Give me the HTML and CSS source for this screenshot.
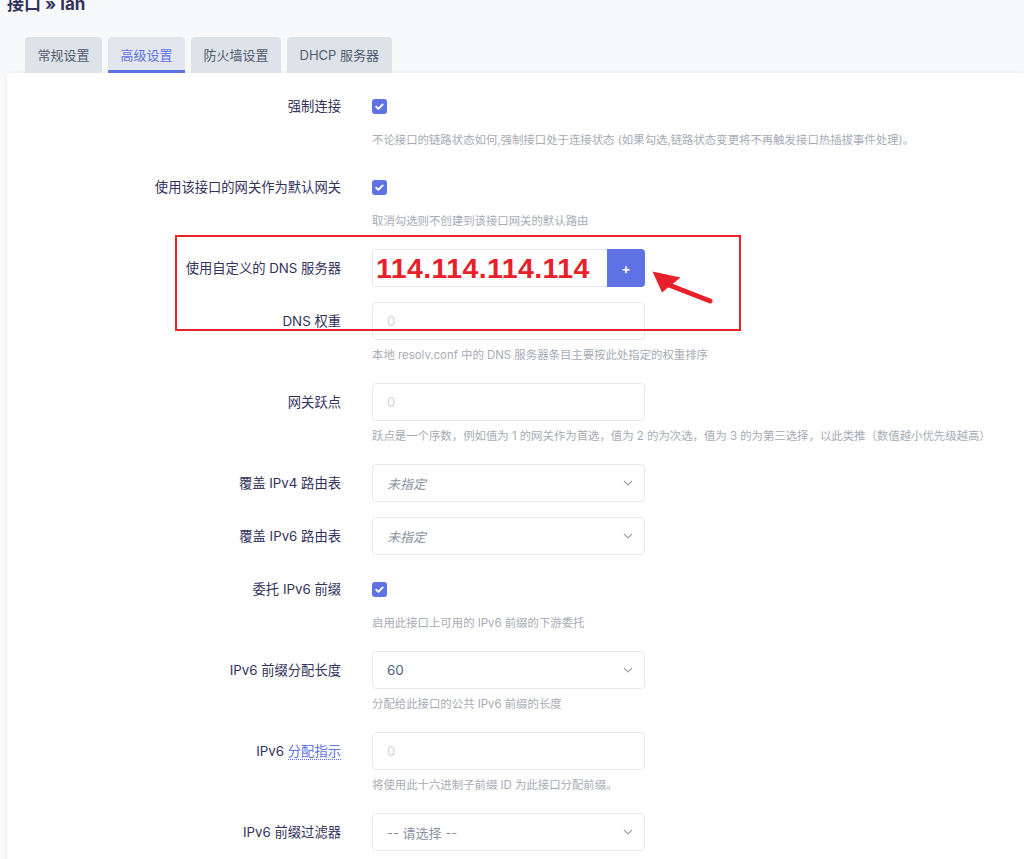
FILE: index.html
```html
<!DOCTYPE html>
<html lang="zh-CN">
<head>
<meta charset="utf-8">
<title>接口 » lan</title>
<link rel="stylesheet" href="styles.css">
</head>
<body>
<div class="page">
  <h2 class="title">接口 » lan</h2>
  <div class="tabs">
    <div class="tab">常规设置</div>
    <div class="tab active">高级设置</div>
    <div class="tab">防火墙设置</div>
    <div class="tab">DHCP 服务器</div>
  </div>
  <div class="panel">
    <div class="row">
      <div class="label">强制连接</div>
      <div class="field"><span class="check"><svg viewBox="0 0 15 15" width="15" height="15"><path d="M4.2 7.7l2.2 2.1 4.3-4.4" fill="none" stroke="#fff" stroke-width="1.9" stroke-linecap="round" stroke-linejoin="round"/></svg></span></div>
      <div class="desc">不论接口的链路状态如何,强制接口处于连接状态 (如果勾选,链路状态变更将不再触发接口热插拔事件处理)。</div>
    </div>
    <div class="row">
      <div class="label">使用该接口的网关作为默认网关</div>
      <div class="field"><span class="check"><svg viewBox="0 0 15 15" width="15" height="15"><path d="M4.2 7.7l2.2 2.1 4.3-4.4" fill="none" stroke="#fff" stroke-width="1.9" stroke-linecap="round" stroke-linejoin="round"/></svg></span></div>
      <div class="desc">取消勾选则不创建到该接口网关的默认路由</div>
    </div>
    <div class="dns-group">
      <div class="row">
        <div class="label">使用自定义的 DNS 服务器</div>
        <div class="field">
          <div class="input dns-input"><span class="dns-value">114.114.114.114</span></div>
          <div class="add-btn">+</div>
        </div>
      </div>
      <div class="row">
        <div class="label">DNS 权重</div>
        <div class="field"><div class="input"><span class="ph">0</span></div></div>
        <div class="desc">本地 resolv.conf 中的 DNS 服务器条目主要按此处指定的权重排序</div>
      </div>
      <div class="red-box"></div>
      <svg class="arrow" viewBox="0 0 75 45" width="75" height="45">
        <line x1="24" y1="20" x2="65" y2="36" stroke="#e8202a" stroke-width="5" stroke-linecap="round"/>
        <polygon points="7.5,6.5 17,27.5 35.5,12.5" fill="#e8202a"/>
      </svg>
    </div>
    <div class="row">
      <div class="label">网关跃点</div>
      <div class="field"><div class="input"><span class="ph">0</span></div></div>
      <div class="desc">跃点是一个序数，例如值为 1 的网关作为首选，值为 2 的为次选，值为 3 的为第三选择，以此类推（数值越小优先级越高）</div>
    </div>
    <div class="row">
      <div class="label">覆盖 IPv4 路由表</div>
      <div class="field"><div class="input select"><span class="unset">未指定</span><svg class="chev" viewBox="0 0 10 6" width="10" height="6"><path d="M1 1l4 4 4-4" fill="none" stroke="#9aa3b1" stroke-width="1.2"/></svg></div></div>
    </div>
    <div class="row">
      <div class="label">覆盖 IPv6 路由表</div>
      <div class="field"><div class="input select"><span class="unset">未指定</span><svg class="chev" viewBox="0 0 10 6" width="10" height="6"><path d="M1 1l4 4 4-4" fill="none" stroke="#9aa3b1" stroke-width="1.2"/></svg></div></div>
    </div>
    <div class="row">
      <div class="label">委托 IPv6 前缀</div>
      <div class="field"><span class="check"><svg viewBox="0 0 15 15" width="15" height="15"><path d="M4.2 7.7l2.2 2.1 4.3-4.4" fill="none" stroke="#fff" stroke-width="1.9" stroke-linecap="round" stroke-linejoin="round"/></svg></span></div>
      <div class="desc">启用此接口上可用的 IPv6 前缀的下游委托</div>
    </div>
    <div class="row">
      <div class="label">IPv6 前缀分配长度</div>
      <div class="field"><div class="input select"><span class="val">60</span><svg class="chev" viewBox="0 0 10 6" width="10" height="6"><path d="M1 1l4 4 4-4" fill="none" stroke="#9aa3b1" stroke-width="1.2"/></svg></div></div>
      <div class="desc">分配给此接口的公共 IPv6 前缀的长度</div>
    </div>
    <div class="row">
      <div class="label">IPv6 <span class="link">分配指示</span></div>
      <div class="field"><div class="input"><span class="ph">0</span></div></div>
      <div class="desc">将使用此十六进制子前缀 ID 为此接口分配前缀。</div>
    </div>
    <div class="row">
      <div class="label">IPv6 前缀过滤器</div>
      <div class="field"><div class="input select"><span class="choose">-- 请选择 --</span><svg class="chev" viewBox="0 0 10 6" width="10" height="6"><path d="M1 1l4 4 4-4" fill="none" stroke="#9aa3b1" stroke-width="1.2"/></svg></div></div>
    </div>
  </div>
</div>
</body>
</html>
```
FILE: styles.css
```css
html, body {
  margin: 0;
  padding: 0;
  background: #f8f9fb;
  font-family: Inter, "Noto Sans CJK SC", sans-serif;
  overflow: hidden;
}
.page {
  padding-left: 7px;
}
.title {
  margin: -6px 0 0;
  font-size: 17px;
  line-height: 20px;
  font-weight: 700;
  color: #32325d;
}
.tabs {
  display: flex;
  gap: 6px;
  margin-top: 23px;
  padding-left: 18px;
}
.tab {
  height: 36px;
  line-height: 36px;
  padding: 0 12.5px;
  background: #dee3ea;
  border-radius: 4px 4px 0 0;
  font-size: 13px;
  color: #4f5a6d;
  box-sizing: border-box;
}
.tab.active {
  color: #5e72e4;
  background: #e3e7ed;
  box-shadow: inset 0 -3px 0 #5e72e4;
}
.panel {
  background: #fff;
  box-shadow: 0 0 4px rgba(30, 40, 70, 0.07);
  padding-top: 7px;
  min-height: 800px;
}
.row {
  display: grid;
  grid-template-columns: 365px 273px;
  padding: 7px 0 8px;
}
.label {
  grid-column: 1;
  text-align: right;
  padding-right: 31px;
  line-height: 38px;
  font-size: 13.3px;
  color: #32325d;
  white-space: nowrap;
}
.field {
  grid-column: 2;
  height: 38px;
  display: flex;
  align-items: center;
}
.desc {
  grid-column: 2;
  margin: 6px 0 4px;
  font-size: 11.4px;
  line-height: 18px;
  color: #a7abb5;
  white-space: nowrap;
}
.check {
  width: 15px;
  height: 15px;
  border-radius: 3px;
  background: #5e72e4;
  display: block;
}
.check svg {
  display: block;
}
.input {
  box-sizing: border-box;
  width: 273px;
  height: 38px;
  border: 1px solid #e6e9ee;
  border-radius: 4px;
  background: #fff;
  display: flex;
  align-items: center;
  padding: 0 14px;
  font-size: 13px;
  position: relative;
}
.ph {
  color: #d3d6dc;
}
.select .chev {
  position: absolute;
  right: 11px;
  top: 15px;
}
.unset {
  font-style: italic;
  color: #8b93a2;
}
.val {
  color: #525f7f;
  font-size: 13.5px;
}
.choose {
  color: #8b93a2;
}
.dns-input {
  width: 235px;
  border-radius: 4px 0 0 4px;
  border-right: none;
  padding-left: 3px;
}
.dns-value {
  font-family: "Liberation Sans", Arial, sans-serif;
  font-weight: 700;
  font-size: 28.5px;
  color: #e8202a;
  letter-spacing: 0.4px;
}
.add-btn {
  width: 38px;
  height: 38px;
  background: #5e72e4;
  color: #fff;
  border-radius: 0 4px 4px 0;
  display: flex;
  align-items: center;
  justify-content: center;
  font-size: 14px;
  font-weight: 600;
}
.dns-group {
  position: relative;
}
.red-box {
  position: absolute;
  left: 168px;
  top: -7px;
  width: 566px;
  height: 96px;
  border: 2px solid #e5232b;
  box-sizing: border-box;
  pointer-events: none;
}
.arrow {
  position: absolute;
  left: 638px;
  top: 23px;
}
.link {
  color: #5e72e4;
  border-bottom: 1px dotted #5e72e4;
}
```
